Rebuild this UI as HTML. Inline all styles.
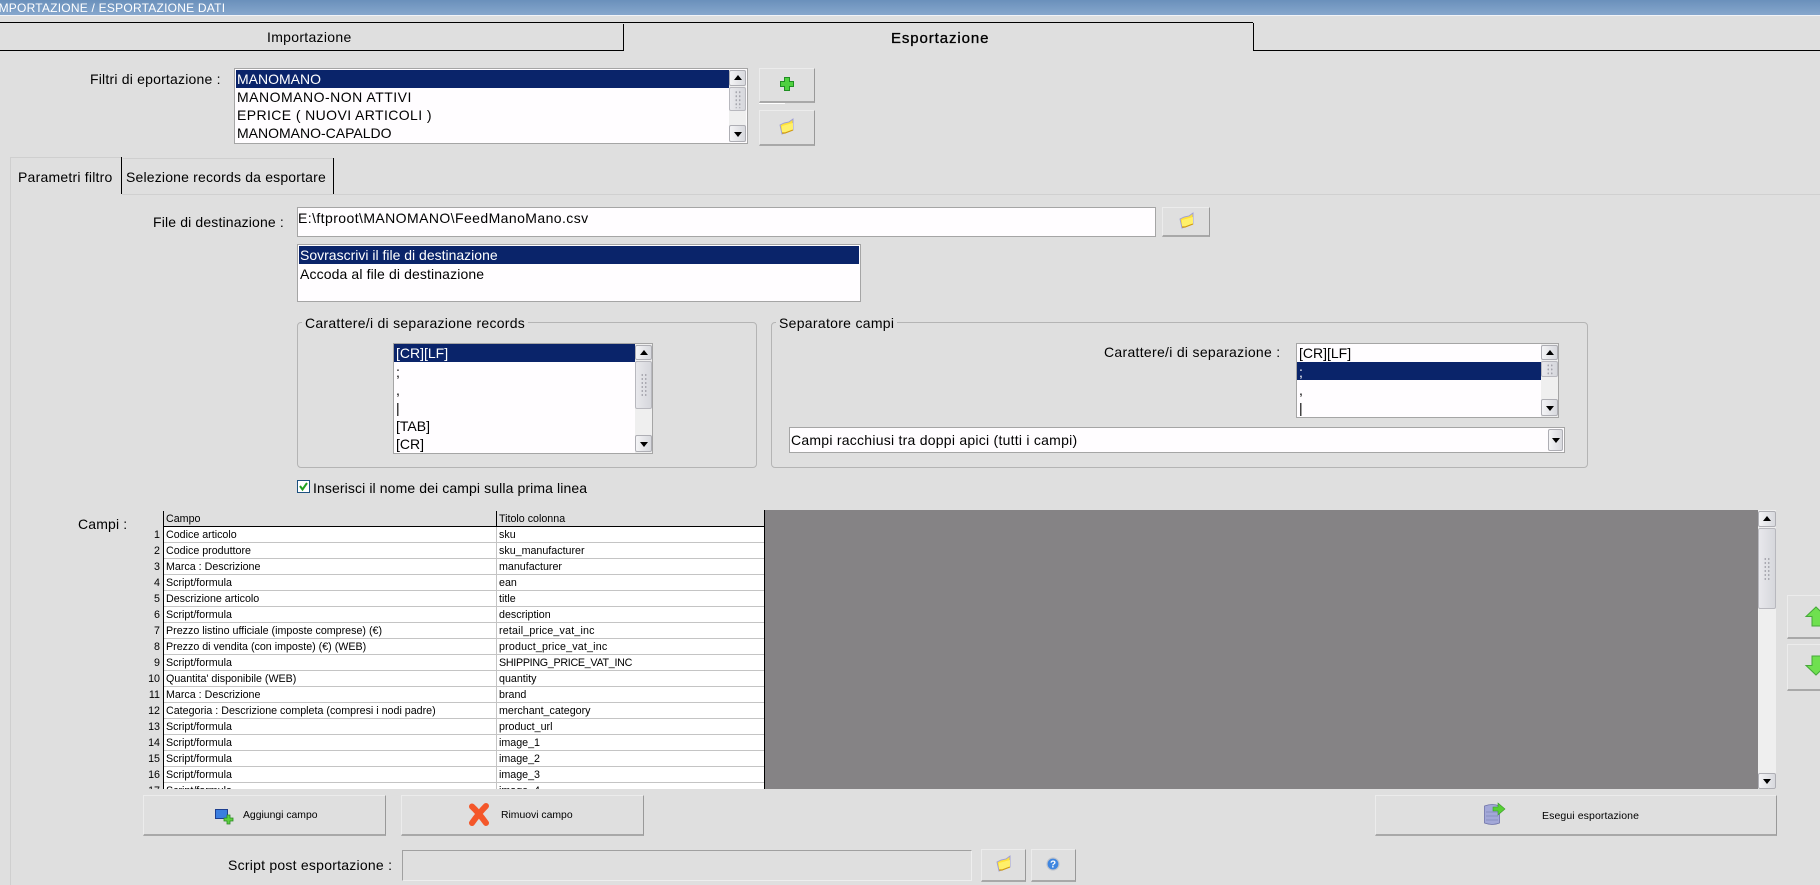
<!DOCTYPE html>
<html><head><meta charset="utf-8"><title>Importazione / Esportazione dati</title>
<style>
html,body{margin:0;padding:0;width:1820px;height:885px;overflow:hidden;background:#dfdfdf}
body{position:relative;font-family:"Liberation Sans",sans-serif;font-size:14px;color:#000}
.a,.t,.b,.box,.sel,.sb,.sb i{position:absolute;box-sizing:border-box}
.t{white-space:nowrap;line-height:18px;height:18px}
.box{background:#fffdff;border:1px solid #a5a5a5}
.sel{background:#0a246a}
.w{color:#fff}
.b{background:#dfdfdf;border-top:1px solid #ececec;border-left:1px solid #ececec;border-right:1px solid #999;border-bottom:2px solid #a8a8a8}
.sb{background:#efefef}
.sb i{display:block;left:0;right:0;background:linear-gradient(90deg,#f4f4f6,#d8d9de);border:1px solid #aeaeb4;border-radius:2px}
.sb i.th{background:linear-gradient(90deg,#e8e8ec,#d6d7dc);border-color:#b8b8be}
.sb i.th:before{content:"";position:absolute;left:50%;top:50%;width:7px;height:min(24px,80%);transform:translate(-50%,-50%);background:radial-gradient(circle,#a2a2aa .8px,transparent 1px) 0 0/3.500px 4px}
.sb i.u:after{content:"";position:absolute;left:50%;top:50%;margin:-3px 0 0 -4px;border:4px solid transparent;border-top:0;border-bottom:5px solid #000}
.sb i.d:after{content:"";position:absolute;left:50%;top:50%;margin:-2px 0 0 -4px;border:4px solid transparent;border-bottom:0;border-top:5px solid #000}
.grp{position:absolute;box-sizing:border-box;border:1px solid #b4b4b4;border-radius:4px}
.lg{position:absolute;background:#dfdfdf;padding:0 3px;white-space:nowrap;line-height:18px}
.g{position:absolute;left:143px;top:510px;width:621px;height:279px;overflow:hidden;background:#fff;font-size:10.700px;line-height:15px}
.r{position:absolute;left:0;width:621px;height:16px;border-bottom:1px solid #c4c4c4;box-sizing:border-box}
.r b{position:absolute;left:0;top:-1px;width:21px;height:17px;background:#dfdfdf;font-weight:normal;text-align:right;padding:2px 3px 0 0;box-sizing:border-box;border-right:1px solid #000;border-bottom:1px solid #c4c4c4;line-height:15px}
.r span{position:absolute;left:23px;top:1px;white-space:nowrap}
.r em{position:absolute;left:356px;top:1px;white-space:nowrap;font-style:normal}
.r u{position:absolute;left:353px;top:0;width:1px;height:16px;background:#c4c4c4}
svg{position:absolute;overflow:visible}
</style></head><body>

<!-- title bar -->
<div class="a" style="left:0;top:0;width:1820px;height:15px;background:linear-gradient(#6a90bb,#87a7cd)"></div>
<div class="a" style="left:0;top:15px;width:1820px;height:1px;background:#f2f4f8"></div>
<div class="t w" style="left:-5px;top:-1px;font-size:12px;letter-spacing:.23px">IMPORTAZIONE / ESPORTAZIONE DATI</div>

<!-- top tabs -->
<div class="a" style="left:0;top:22px;width:1253px;height:1px;background:#000"></div>
<div class="a" style="left:0;top:50px;width:623px;height:1px;background:#000"></div>
<div class="a" style="left:623px;top:24px;width:1px;height:27px;background:#000"></div>
<div class="a" style="left:1253px;top:23px;width:1px;height:28px;background:#000"></div>
<div class="a" style="left:1253px;top:50px;width:567px;height:1px;background:#000"></div>
<div class="t" style="left:267px;top:28px;font-size:14px;letter-spacing:.3px">Importazione</div>
<div class="t" style="left:891px;top:30px;font-size:15px;letter-spacing:.9px;-webkit-text-stroke:.3px #000">Esportazione</div>

<!-- filter -->
<div class="t" style="left:90px;top:70px;letter-spacing:.2px">Filtri di eportazione :</div>
<div class="box" style="left:234px;top:68px;width:514px;height:76px"></div>
<div class="sel" style="left:236px;top:70px;width:493px;height:18px"></div>
<div class="t w" style="left:237px;top:70px">MANOMANO</div>
<div class="t" style="left:237px;top:88px;letter-spacing:.5px">MANOMANO-NON ATTIVI</div>
<div class="t" style="left:237px;top:106px;letter-spacing:.4px">EPRICE ( NUOVI ARTICOLI )</div>
<div class="t" style="left:237px;top:124px">MANOMANO-CAPALDO</div>
<div class="sb" style="left:729px;top:70px;width:17px;height:72px"><i class="u" style="top:0;height:16px"></i><i class="th" style="top:17px;height:24px"></i><i class="d" style="top:55px;height:17px"></i></div>
<div class="b" style="left:759px;top:68px;width:56px;height:35px"></div>
<div class="a" style="left:759px;top:103px;width:26px;height:1px;background:#fff"></div>
<svg style="left:780px;top:77px" width="14" height="14" viewBox="0 0 14 14"><path d="M4.500.5h5v4h4v5h-4v4h-5v-4h-4v-5h4z" fill="#4fd13f" stroke="#1f8f22"/></svg>
<div class="b" style="left:759px;top:110px;width:56px;height:36px"></div>
<svg style="left:779px;top:119px" width="15" height="15" viewBox="0 0 15 15"><path d="M1 6l4-2 5-1 4-3v11l-8 3-3 1z" fill="#ffe23a" stroke="#9c9cd8" stroke-width=".9"/><path d="M3 7l11-3v7l-8 3-3 0z" fill="#fff06a"/><path d="M3 14l3 0 8-3" fill="none" stroke="#d09a10" stroke-width="1.200"/></svg>

<!-- inner tabs -->
<div class="a" style="left:10px;top:157px;width:1px;height:728px;background:#cfcfcf"></div>
<div class="a" style="left:10px;top:157px;width:112px;height:1px;background:#cfcfcf"></div>
<div class="a" style="left:121px;top:157px;width:1px;height:37px;background:#000"></div>
<div class="a" style="left:123px;top:158px;width:210px;height:1px;background:#cfcfcf"></div>
<div class="a" style="left:333px;top:158px;width:1px;height:36px;background:#000"></div>
<div class="a" style="left:122px;top:194px;width:1698px;height:1px;background:#d0d0d0"></div>
<div class="t" style="left:18px;top:168px;font-size:14px;letter-spacing:.22px">Parametri filtro</div>
<div class="t" style="left:126px;top:168px;font-size:14px;letter-spacing:.18px">Selezione records da esportare</div>

<!-- destination -->
<div class="t" style="left:153px;top:213px;letter-spacing:.15px">File di destinazione :</div>
<div class="box" style="left:297px;top:207px;width:859px;height:30px"></div>
<div class="t" style="left:298px;top:209px;letter-spacing:.42px">E:\ftproot\MANOMANO\FeedManoMano.csv</div>
<div class="b" style="left:1162px;top:207px;width:48px;height:30px"></div>
<svg style="left:1179px;top:213px" width="15" height="15" viewBox="0 0 15 15"><path d="M1 6l4-2 5-1 4-3v11l-8 3-3 1z" fill="#ffe23a" stroke="#9c9cd8" stroke-width=".9"/><path d="M3 7l11-3v7l-8 3-3 0z" fill="#fff06a"/><path d="M3 14l3 0 8-3" fill="none" stroke="#d09a10" stroke-width="1.200"/></svg>

<div class="box" style="left:297px;top:244px;width:564px;height:58px"></div>
<div class="sel" style="left:299px;top:246px;width:560px;height:18px"></div>
<div class="t w" style="left:300px;top:246px">Sovrascrivi il file di destinazione</div>
<div class="t" style="left:300px;top:265px;letter-spacing:.12px">Accoda al file di destinazione</div>

<!-- group 1 -->
<div class="grp" style="left:297px;top:322px;width:460px;height:146px"></div>
<div class="lg" style="left:302px;top:314px;letter-spacing:.27px">Carattere/i di separazione records</div>
<div class="box" style="left:393px;top:343px;width:260px;height:111px"></div>
<div class="sel" style="left:394px;top:344px;width:241px;height:18px"></div>
<div class="t w" style="left:396px;top:344px">[CR][LF]</div>
<div class="t" style="left:396px;top:363px">;</div>
<div class="t" style="left:396px;top:381px">,</div>
<div class="t" style="left:396px;top:399px">|</div>
<div class="t" style="left:396px;top:417px">[TAB]</div>
<div class="t" style="left:396px;top:435px">[CR]</div>
<div class="sb" style="left:635px;top:344px;width:17px;height:109px"><i class="u" style="top:1px;height:15px"></i><i class="th" style="top:17px;height:48px"></i><i class="d" style="top:91px;height:17px"></i></div>

<!-- group 2 -->
<div class="grp" style="left:771px;top:322px;width:817px;height:146px"></div>
<div class="lg" style="left:776px;top:314px;letter-spacing:.3px">Separatore campi</div>
<div class="t" style="left:1104px;top:343px;letter-spacing:.3px">Carattere/i di separazione :</div>
<div class="box" style="left:1296px;top:343px;width:263px;height:75px"></div>
<div class="sel" style="left:1297px;top:362px;width:244px;height:18px"></div>
<div class="t" style="left:1299px;top:344px">[CR][LF]</div>
<div class="t w" style="left:1299px;top:363px">;</div>
<div class="t" style="left:1299px;top:381px">,</div>
<div class="t" style="left:1299px;top:399px">|</div>
<div class="sb" style="left:1541px;top:344px;width:17px;height:73px"><i class="u" style="top:1px;height:15px"></i><i class="th" style="top:17px;height:16px"></i><i class="d" style="top:55px;height:17px"></i></div>
<div class="box" style="left:789px;top:427px;width:776px;height:26px"></div>
<div class="t" style="left:791px;top:431px;letter-spacing:.25px">Campi racchiusi tra doppi apici (tutti i campi)</div>
<div class="sb" style="left:1548px;top:429px;width:15px;height:22px;background:none"><i class="d" style="top:0;height:22px"></i></div>

<!-- checkbox -->
<div class="a" style="left:297px;top:480px;width:13px;height:13px;background:#fff;border:1px solid #1c5180;box-sizing:border-box"></div>
<svg style="left:299px;top:482px" width="9" height="9" viewBox="0 0 9 9"><path d="M1 4l2.500 3.500L8 1" fill="none" stroke="#21a121" stroke-width="2"/></svg>
<div class="t" style="left:313px;top:479px;letter-spacing:.11px">Inserisci il nome dei campi sulla prima linea</div>

<!-- grid -->
<div class="t" style="left:78px;top:515px;letter-spacing:.15px">Campi :</div>
<div class="a" style="left:143px;top:510px;width:1633px;height:279px;background:#858385"></div>
<div class="g">
<div class="a" style="left:0;top:0;width:621px;height:17px;background:#dfdfdf;border-bottom:1px solid #000;box-sizing:border-box"></div>
<div class="a" style="left:20px;top:1px;width:1px;height:16px;background:#000"></div>
<div class="a" style="left:353px;top:1px;width:1px;height:16px;background:#000"></div>
<div class="a" style="left:23px;top:2px;white-space:nowrap">Campo</div>
<div class="a" style="left:356px;top:2px;white-space:nowrap">Titolo colonna</div>
<div class="r" style="top:17px"><b>1</b><span>Codice articolo</span><u></u><em>sku</em></div>
<div class="r" style="top:33px"><b>2</b><span>Codice produttore</span><u></u><em>sku_manufacturer</em></div>
<div class="r" style="top:49px"><b>3</b><span>Marca : Descrizione</span><u></u><em>manufacturer</em></div>
<div class="r" style="top:65px"><b>4</b><span>Script/formula</span><u></u><em>ean</em></div>
<div class="r" style="top:81px"><b>5</b><span>Descrizione articolo</span><u></u><em>title</em></div>
<div class="r" style="top:97px"><b>6</b><span>Script/formula</span><u></u><em>description</em></div>
<div class="r" style="top:113px"><b>7</b><span>Prezzo listino ufficiale (imposte comprese) (€)</span><u></u><em style="letter-spacing:.18px">retail_price_vat_inc</em></div>
<div class="r" style="top:129px"><b>8</b><span>Prezzo di vendita (con imposte) (€) (WEB)</span><u></u><em style="letter-spacing:.18px">product_price_vat_inc</em></div>
<div class="r" style="top:145px"><b>9</b><span>Script/formula</span><u></u><em style="letter-spacing:-.28px">SHIPPING_PRICE_VAT_INC</em></div>
<div class="r" style="top:161px"><b>10</b><span>Quantita' disponibile (WEB)</span><u></u><em>quantity</em></div>
<div class="r" style="top:177px"><b>11</b><span>Marca : Descrizione</span><u></u><em>brand</em></div>
<div class="r" style="top:193px"><b>12</b><span>Categoria : Descrizione completa (compresi i nodi padre)</span><u></u><em>merchant_category</em></div>
<div class="r" style="top:209px"><b>13</b><span>Script/formula</span><u></u><em>product_url</em></div>
<div class="r" style="top:225px"><b>14</b><span>Script/formula</span><u></u><em>image_1</em></div>
<div class="r" style="top:241px"><b>15</b><span>Script/formula</span><u></u><em>image_2</em></div>
<div class="r" style="top:257px"><b>16</b><span>Script/formula</span><u></u><em>image_3</em></div>
<div class="r" style="top:273px"><b>17</b><span>Script/formula</span><u></u><em>image_4</em></div>
</div>
<div class="a" style="left:764px;top:510px;width:1px;height:279px;background:#000"></div>
<div class="sb" style="left:1758px;top:510px;width:18px;height:279px"><i class="u" style="top:1px;height:16px"></i><i class="th" style="top:18px;height:81px"></i><i class="d" style="top:263px;height:16px"></i></div>

<!-- side buttons -->
<div class="b" style="left:1787px;top:595px;width:50px;height:44px"></div>
<svg style="left:1806px;top:607px" width="24" height="19" viewBox="0 0 24 19"><path d="M0 9.500L10 0l10 9.500h-4V19H6V9.500z" fill="#6fe04f" stroke="#45a83a"/></svg>
<div class="b" style="left:1787px;top:644px;width:50px;height:47px"></div>
<svg style="left:1806px;top:656px" width="24" height="19" viewBox="0 0 24 19"><path d="M6 0h10v9.500h4L10 19 0 9.500h6z" fill="#6fe04f" stroke="#45a83a"/></svg>

<!-- action buttons -->
<div class="b" style="left:143px;top:795px;width:243px;height:41px"></div>
<svg style="left:215px;top:808px" width="19" height="16" viewBox="0 0 19 16"><rect x=".5" y="1.500" width="12" height="9" fill="#3a7ee0" stroke="#1d3f90"/><path d="M12 7h3v3h3v3h-3v3h-3v-3H9v-3h3z" fill="#5ed040" stroke="#2a8a22" stroke-width=".8"/></svg>
<div class="t" style="left:243px;top:807px;font-size:10.400px">Aggiungi campo</div>

<div class="b" style="left:401px;top:795px;width:243px;height:41px"></div>
<svg style="left:468px;top:803px" width="22" height="23" viewBox="0 0 22 23"><path d="M4 3.500Q10 9 18 20M18 3Q11 10 4 20" fill="none" stroke="#f4572a" stroke-width="6" stroke-linecap="round"/></svg>
<div class="t" style="left:501px;top:807px;font-size:10.400px">Rimuovi campo</div>

<div class="b" style="left:1375px;top:795px;width:402px;height:41px"></div>
<svg style="left:1484px;top:803px" width="21" height="23" viewBox="0 0 21 23"><path d="M.5 3q8-3 15 0v17q-7 3-15 0z" fill="#a3a8d8" stroke="#6e72a8" stroke-width=".8"/><path d="M2 9h12M2 13h12M2 17h12" stroke="#8a8fc0"/><path d="M9 4h5V0l7 6-7 6V8H9z" fill="#57d034" stroke="#3a9a2a" stroke-width=".6"/></svg>
<div class="t" style="left:1542px;top:807px;font-size:10.500px;letter-spacing:.1px">Esegui esportazione</div>

<!-- script -->
<div class="t" style="left:228px;top:856px;letter-spacing:.24px">Script post esportazione :</div>
<div class="a" style="left:402px;top:850px;width:570px;height:31px;box-sizing:border-box;border-top:1px solid #a0a0a0;border-left:1px solid #a0a0a0;border-right:1px solid #eee;border-bottom:1px solid #eee"></div>
<div class="b" style="left:981px;top:849px;width:45px;height:33px"></div>
<svg style="left:996px;top:856px" width="15" height="15" viewBox="0 0 15 15"><path d="M1 6l4-2 5-1 4-3v11l-8 3-3 1z" fill="#ffe23a" stroke="#9c9cd8" stroke-width=".9"/><path d="M3 7l11-3v7l-8 3-3 0z" fill="#fff06a"/><path d="M3 14l3 0 8-3" fill="none" stroke="#d09a10" stroke-width="1.200"/></svg>
<div class="b" style="left:1031px;top:849px;width:45px;height:33px"></div>
<svg style="left:1046px;top:857px" width="14" height="14" viewBox="0 0 14 14"><circle cx="7" cy="7" r="6" fill="#3f86e0" stroke="#c0c4cc" stroke-width="1.200"/><text x="7" y="10.500" font-family="Liberation Sans,sans-serif" font-size="10" font-weight="bold" fill="#fff" text-anchor="middle">?</text></svg>
</body></html>
